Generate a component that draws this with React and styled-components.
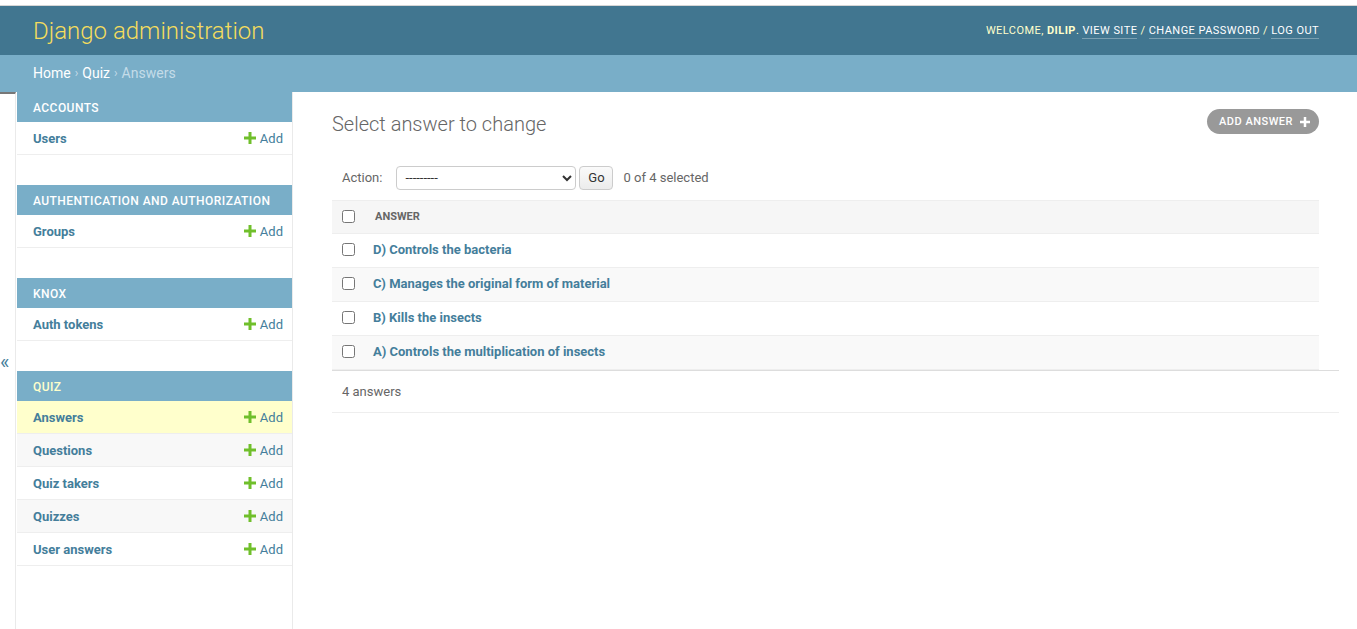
import React from 'react';
import styled, { createGlobalStyle } from 'styled-components';

const GlobalStyle = createGlobalStyle`
  html, body, #root {
    margin: 0;
    padding: 0;
    height: 100%;
  }
  body {
    font-family: Roboto, "Liberation Sans", Arial, sans-serif;
    font-size: 14px;
    color: #333;
    background: #fff;
  }
  a {
    color: #447e9b;
    text-decoration: none;
  }
`;

const Page = styled.div`
  display: flex;
  flex-direction: column;
  min-height: 100vh;
`;

const TopStrip = styled.div`
  height: 5px;
  background: #fff;
  border-bottom: 1px solid #d6d6d6;
`;

const Header = styled.header`
  display: flex;
  align-items: center;
  justify-content: space-between;
  height: 49px;
  padding: 0 38px 0 33px;
  background: #417690;
`;

const Branding = styled.h1`
  margin: 0;
  font-size: 24px;
  font-weight: 300;
  color: #f5dd5d;
`;

const UserTools = styled.div`
  font-size: 11px;
  letter-spacing: 0.45px;
  text-transform: uppercase;
  color: #ffc;
  padding-bottom: 1px;

  strong {
    font-weight: 700;
  }
`;

const ToolLink = styled.a`
  color: #fff;
  border-bottom: 1px solid rgba(255, 255, 255, 0.3);
  padding-bottom: 1px;
`;

const Breadcrumbs = styled.nav`
  height: 37px;
  display: flex;
  align-items: center;
  padding: 0 33px 2px;
  box-sizing: border-box;
  background: #79aec8;
  color: #c4dce8;
  font-size: 14px;

  a {
    color: #fff;
  }
`;

const Sep = styled.span`
  margin: 0 4px;
  font-size: 12px;
`;

const Main = styled.div`
  flex: 1;
  display: flex;
`;

const ToggleColumn = styled.div`
  flex: 0 0 15px;
  display: flex;
  align-items: center;
  border-top: 2px solid #777;
  border-right: 1px solid #eaeaea;
  color: #447e9b;
  font-size: 20px;
  line-height: 1;
`;

const Sidebar = styled.nav`
  flex: 0 0 275px;
  padding-left: 1px;
  border-right: 1px solid #eaeaea;
`;

const Module = styled.div`
  margin-bottom: 30px;
`;

const Caption = styled.div`
  height: 30px;
  box-sizing: border-box;
  display: flex;
  align-items: center;
  padding: 2px 0 0 16px;
  background: #79aec8;
  color: ${p => (p.$current ? '#ffc' : '#fff')};
  font-size: 12px;
  font-weight: 500;
  letter-spacing: 0.45px;
  text-transform: uppercase;
`;

const ModelRow = styled.div`
  height: 32px;
  display: flex;
  align-items: center;
  justify-content: space-between;
  padding: 0 9px 0 16px;
  border-bottom: 1px solid #eee;
  background: ${p => (p.$current ? '#ffc' : p.$even ? '#f8f8f8' : '#fff')};
  font-size: 13px;
`;

const ModelName = styled.a`
  font-weight: 700;
`;

const AddLink = styled.a`
  display: flex;
  align-items: center;
  gap: 4px;
`;

const Content = styled.main`
  flex: 1;
  padding: 20px 38px 20px 39px;
`;

const TitleBar = styled.div`
  display: flex;
  justify-content: space-between;
  align-items: flex-start;
  margin-bottom: 20px;
`;

const Title = styled.h1`
  margin: 0;
  font-size: 20px;
  line-height: 24px;
  font-weight: 300;
  color: #666;
`;

const AddButton = styled.a`
  display: flex;
  align-items: center;
  gap: 7px;
  height: 25px;
  margin-top: -3px;
  padding: 0 9px 0 12px;
  border-radius: 13px;
  background: #999;
  color: #fff;
  font-size: 11px;
  font-weight: 500;
  letter-spacing: 0.5px;
  text-transform: uppercase;
`;

const Actions = styled.div`
  height: 44px;
  display: flex;
  align-items: center;
  padding: 0 0 1px 10px;
  box-sizing: border-box;
  color: #666;
  font-size: 13px;
`;

const ActionLabel = styled.label`
  margin-right: 14px;
`;

const Select = styled.select`
  width: 180px;
  height: 24px;
  border: 1px solid #ccc;
  border-radius: 4px;
  background: #fff;
  font-family: inherit;
  font-size: 13px;
  color: #333;
  padding: 0 4px;
`;

const GoButton = styled.button`
  width: 34px;
  height: 24px;
  margin-left: 3px;
  padding: 0;
  border: 1px solid #ccc;
  border-radius: 4px;
  background: linear-gradient(#fafafa, #ececec);
  font-family: inherit;
  font-size: 13px;
  color: #333;
`;

const Counter = styled.span`
  margin-left: 10px;
`;

const Table = styled.div`
  border-top: 1px solid #eee;
`;

const HeadRow = styled.div`
  height: 33px;
  box-sizing: border-box;
  display: flex;
  align-items: center;
  padding-bottom: 2px;
  background: #f6f6f6;
  border-bottom: 1px solid #eee;
`;

const Row = styled.div`
  height: 33px;
  display: flex;
  align-items: center;
  border-bottom: 1px solid #eee;
  background: ${p => (p.$even ? '#f9f9f9' : '#fff')};

  & > * {
    margin-bottom: 2px;
  }
`;

const CheckCell = styled.div`
  width: 41px;
  padding-left: 10px;
  box-sizing: border-box;
  display: flex;

  input {
    margin: 0;
    width: 13px;
    height: 13px;
  }
`;

const HeadLabel = styled.span`
  padding-left: 2px;
  font-size: 11px;
  font-weight: 700;
  color: #666;
  text-transform: uppercase;
`;

const AnswerLink = styled.a`
  font-size: 13px;
  font-weight: 700;
`;

const Paginator = styled.div`
  margin-right: -20px;
  height: 43px;
  box-sizing: border-box;
  display: flex;
  align-items: center;
  padding: 0 0 1px 10px;
  border-top: 1px solid #ddd;
  border-bottom: 1px solid #eee;
  color: #666;
  font-size: 13px;
`;

const PlusIcon = ({ color, size = 12 }) => (
  <svg width={size} height={size} viewBox="0 0 12 12">
    <path d="M4.5 0h3v4.5H12v3H7.5V12h-3V7.5H0v-3h4.5z" fill={color} />
  </svg>
);

const modules = [
  { name: 'Accounts', models: ['Users'] },
  { name: 'Authentication and Authorization', models: ['Groups'] },
  { name: 'Knox', models: ['Auth tokens'] },
  {
    name: 'Quiz',
    current: true,
    models: ['Answers', 'Questions', 'Quiz takers', 'Quizzes', 'User answers'],
  },
];

const answers = [
  'D) Controls the bacteria',
  'C) Manages the original form of material',
  'B) Kills the insects',
  'A) Controls the multiplication of insects',
];

export default function App() {
  return (
    <Page>
      <GlobalStyle />
      <TopStrip />
      <Header>
        <Branding>Django administration</Branding>
        <UserTools>
          Welcome, <strong>dilip</strong>. <ToolLink href="#">View site</ToolLink> /{' '}
          <ToolLink href="#">Change password</ToolLink> / <ToolLink href="#">Log out</ToolLink>
        </UserTools>
      </Header>
      <Breadcrumbs>
        <a href="#">Home</a>
        <Sep>›</Sep>
        <a href="#">Quiz</a>
        <Sep>›</Sep>
        Answers
      </Breadcrumbs>
      <Main>
        <ToggleColumn>«</ToggleColumn>
        <Sidebar>
          {modules.map(mod => (
            <Module key={mod.name}>
              <Caption $current={mod.current}>{mod.name}</Caption>
              {mod.models.map((model, i) => (
                <ModelRow
                  key={model}
                  $current={mod.current && i === 0}
                  $even={i % 2 === 1}
                >
                  <ModelName href="#">{model}</ModelName>
                  <AddLink href="#">
                    <PlusIcon color="#70bf2b" />
                    Add
                  </AddLink>
                </ModelRow>
              ))}
            </Module>
          ))}
        </Sidebar>
        <Content>
          <TitleBar>
            <Title>Select answer to change</Title>
            <AddButton href="#">
              Add answer
              <PlusIcon color="#fff" size={10} />
            </AddButton>
          </TitleBar>
          <Actions>
            <ActionLabel>Action:</ActionLabel>
            <Select defaultValue="">
              <option value="">---------</option>
              <option value="delete">Delete selected answers</option>
            </Select>
            <GoButton type="button">Go</GoButton>
            <Counter>0 of 4 selected</Counter>
          </Actions>
          <Table>
            <HeadRow>
              <CheckCell>
                <input type="checkbox" />
              </CheckCell>
              <HeadLabel>Answer</HeadLabel>
            </HeadRow>
            {answers.map((a, i) => (
              <Row key={a} $even={i % 2 === 1}>
                <CheckCell>
                  <input type="checkbox" />
                </CheckCell>
                <AnswerLink href="#">{a}</AnswerLink>
              </Row>
            ))}
          </Table>
          <Paginator>4 answers</Paginator>
        </Content>
      </Main>
    </Page>
  );
}
